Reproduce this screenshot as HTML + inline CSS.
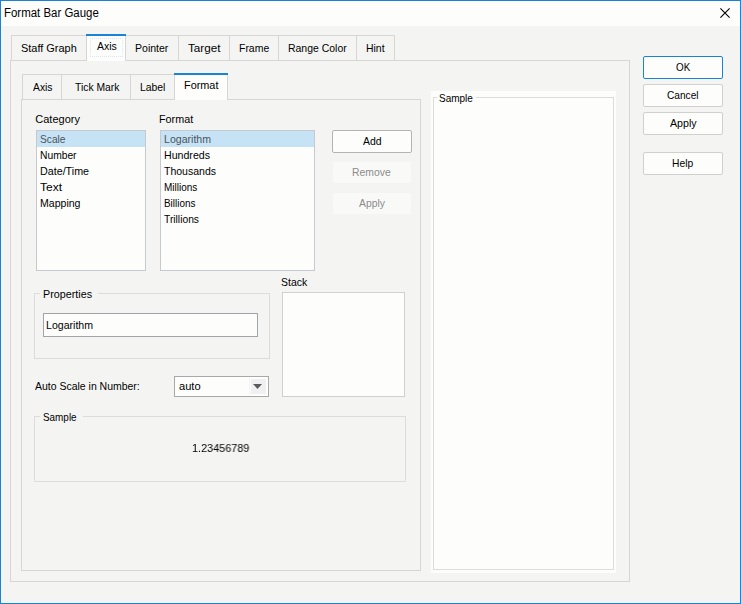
<!DOCTYPE html>
<html><head><meta charset="utf-8"><title>Format Bar Gauge</title>
<style>
html,body{margin:0;padding:0;}
body{width:741px;height:604px;position:relative;overflow:hidden;background:#f4f5f3;font-family:"Liberation Sans",sans-serif;}
div{position:absolute;}
.t{position:absolute;display:inline-block;white-space:nowrap;transform-origin:0 0;font-family:"Liberation Sans",sans-serif;}
</style></head><body>
<div style="left:0px;top:0px;width:741px;height:604px;background:#1883d7;"></div>
<div style="left:1px;top:1px;width:739px;height:602px;background:#f4f5f3;"></div>
<div style="left:1px;top:1px;width:739px;height:25px;background:#fdfefc;"></div>
<span class="t" style="left:3.8px;top:6.84px;font-size:12px;line-height:12px;color:#000;transform:scaleX(0.9539);">Format Bar Gauge</span>
<svg style="position:absolute;left:719px;top:7px" width="13" height="13" viewBox="0 0 13 13"><path d="M1.4 1.4 L10.6 10.6 M10.6 1.4 L1.4 10.6" stroke="#000" stroke-width="1.1" fill="none"/></svg>
<div style="left:10px;top:60px;width:620px;height:522px;border:1px solid #d6d7d5;box-sizing:border-box;"></div>
<div style="left:11px;top:35px;width:76px;height:26px;background:#f4f5f3;border:1px solid #d6d7d5;box-sizing:border-box;"></div>
<span class="t" style="left:21.4px;top:42.69px;font-size:11px;line-height:11px;color:#000;transform:scaleX(0.9947);">Staff Graph</span>
<div style="left:125px;top:35px;width:54px;height:26px;background:#f4f5f3;border:1px solid #d6d7d5;box-sizing:border-box;"></div>
<span class="t" style="left:135.4px;top:42.69px;font-size:11px;line-height:11px;color:#000;transform:scaleX(0.9570);">Pointer</span>
<div style="left:178px;top:35px;width:52px;height:26px;background:#f4f5f3;border:1px solid #d6d7d5;box-sizing:border-box;"></div>
<span class="t" style="left:188.4px;top:42.69px;font-size:11px;line-height:11px;color:#000;transform:scaleX(1.0621);">Target</span>
<div style="left:229px;top:35px;width:50px;height:26px;background:#f4f5f3;border:1px solid #d6d7d5;box-sizing:border-box;"></div>
<span class="t" style="left:238.895px;top:42.69px;font-size:11px;line-height:11px;color:#000;transform:scaleX(0.9500);">Frame</span>
<div style="left:278px;top:35px;width:79px;height:26px;background:#f4f5f3;border:1px solid #d6d7d5;box-sizing:border-box;"></div>
<span class="t" style="left:288.145px;top:42.69px;font-size:11px;line-height:11px;color:#000;transform:scaleX(0.9500);">Range Color</span>
<div style="left:356px;top:35px;width:39px;height:26px;background:#f4f5f3;border:1px solid #d6d7d5;box-sizing:border-box;"></div>
<span class="t" style="left:366.19px;top:42.69px;font-size:11px;line-height:11px;color:#000;transform:scaleX(0.9500);">Hint</span>
<div style="left:86px;top:34px;width:40px;height:27px;background:#fdfefc;border:1px solid #d6d7d5;box-sizing:border-box;border-bottom:none;"></div>
<div style="left:86px;top:34px;width:40px;height:2px;background:#1883d7;"></div>
<div style="left:90px;top:38px;width:33px;height:19px;border:1px dotted #d6e6f4;box-sizing:border-box;"></div>
<span class="t" style="left:96.7px;top:40.69px;font-size:11px;line-height:11px;color:#000;transform:scaleX(0.9519);">Axis</span>
<div style="left:21px;top:99px;width:400px;height:472px;border:1px solid #d6d7d5;box-sizing:border-box;"></div>
<div style="left:22px;top:74px;width:40px;height:26px;background:#f4f5f3;border:1px solid #d6d7d5;box-sizing:border-box;"></div>
<span class="t" style="left:32.8px;top:81.69px;font-size:11px;line-height:11px;color:#000;transform:scaleX(0.9375);">Axis</span>
<div style="left:61px;top:74px;width:70px;height:26px;background:#f4f5f3;border:1px solid #d6d7d5;box-sizing:border-box;"></div>
<span class="t" style="left:74.6px;top:81.69px;font-size:11px;line-height:11px;color:#000;transform:scaleX(0.9387);">Tick Mark</span>
<div style="left:130px;top:74px;width:46px;height:26px;background:#f4f5f3;border:1px solid #d6d7d5;box-sizing:border-box;"></div>
<span class="t" style="left:140.2px;top:81.69px;font-size:11px;line-height:11px;color:#000;transform:scaleX(0.9442);">Label</span>
<div style="left:174px;top:73px;width:54px;height:27px;background:#fdfefc;border:1px solid #d6d7d5;box-sizing:border-box;border-bottom:none;"></div>
<div style="left:174px;top:73px;width:54px;height:2px;background:#1883d7;"></div>
<span class="t" style="left:184.4px;top:79.69px;font-size:11px;line-height:11px;color:#000;transform:scaleX(0.9885);">Format</span>
<span class="t" style="left:35.3px;top:114.19px;font-size:11px;line-height:11px;color:#000;transform:scaleX(1.0000);">Category</span>
<span class="t" style="left:159.2px;top:114.19px;font-size:11px;line-height:11px;color:#000;transform:scaleX(0.9799);">Format</span>
<div style="left:36px;top:130px;width:110px;height:141px;background:#fdfefc;border:1px solid #c6c9cf;box-sizing:border-box;"></div>
<div style="left:37px;top:131px;width:108px;height:16px;background:#c5e3f5;"></div>
<span class="t" style="left:40.2px;top:133.69px;font-size:11px;line-height:11px;color:#4b5560;transform:scaleX(0.9273);">Scale</span>
<span class="t" style="left:40.2px;top:149.69px;font-size:11px;line-height:11px;color:#000;transform:scaleX(0.9335);">Number</span>
<span class="t" style="left:40.2px;top:165.69px;font-size:11px;line-height:11px;color:#000;transform:scaleX(0.9742);">Date/Time</span>
<span class="t" style="left:40.2px;top:181.69px;font-size:11px;line-height:11px;color:#000;transform:scaleX(1.0891);">Text</span>
<span class="t" style="left:40.2px;top:197.69px;font-size:11px;line-height:11px;color:#000;transform:scaleX(0.9597);">Mapping</span>
<div style="left:160px;top:130px;width:155px;height:141px;background:#fdfefc;border:1px solid #c6c9cf;box-sizing:border-box;"></div>
<div style="left:161px;top:131px;width:153px;height:16px;background:#c5e3f5;"></div>
<span class="t" style="left:164.2px;top:133.69px;font-size:11px;line-height:11px;color:#4b5560;transform:scaleX(0.9611);">Logarithm</span>
<span class="t" style="left:164.2px;top:149.69px;font-size:11px;line-height:11px;color:#000;transform:scaleX(0.9644);">Hundreds</span>
<span class="t" style="left:164.2px;top:165.69px;font-size:11px;line-height:11px;color:#000;transform:scaleX(0.9559);">Thousands</span>
<span class="t" style="left:164.2px;top:181.69px;font-size:11px;line-height:11px;color:#000;transform:scaleX(0.9074);">Millions</span>
<span class="t" style="left:164.2px;top:197.69px;font-size:11px;line-height:11px;color:#000;transform:scaleX(0.8997);">Billions</span>
<span class="t" style="left:164.2px;top:213.69px;font-size:11px;line-height:11px;color:#000;transform:scaleX(0.9333);">Trillions</span>
<div style="left:332px;top:130px;width:80px;height:23px;background:#fdfefc;border:1px solid #b4b4b4;box-sizing:border-box;border-radius:2px;"></div>
<span class="t" style="left:362.7px;top:135.69px;font-size:11px;line-height:11px;color:#000;transform:scaleX(0.9490);">Add</span>
<div style="left:333px;top:162px;width:78px;height:21px;background:#f9faf8;"></div>
<span class="t" style="left:352.3px;top:167.19px;font-size:11px;line-height:11px;color:#8b8b8b;transform:scaleX(0.9463);">Remove</span>
<div style="left:333px;top:193px;width:78px;height:21px;background:#f9faf8;"></div>
<span class="t" style="left:359px;top:197.69px;font-size:11px;line-height:11px;color:#8b8b8b;transform:scaleX(0.9455);">Apply</span>
<div style="left:34px;top:293px;width:236px;height:66px;border:1px solid #dcdddb;box-sizing:border-box;"></div>
<div style="left:40px;top:289px;width:58px;height:10px;background:#f4f5f3;"></div>
<span class="t" style="left:43.3px;top:288.69px;font-size:11px;line-height:11px;color:#000;transform:scaleX(0.9780);">Properties</span>
<div style="left:43px;top:313px;width:215px;height:24px;background:#fdfefc;border:1px solid #a2a4aa;box-sizing:border-box;"></div>
<span class="t" style="left:46.1px;top:320.19px;font-size:11px;line-height:11px;color:#000;transform:scaleX(0.9611);">Logarithm</span>
<span class="t" style="left:281.2px;top:276.69px;font-size:11px;line-height:11px;color:#000;transform:scaleX(0.9527);">Stack</span>
<div style="left:282px;top:292px;width:123px;height:105px;background:#fdfefc;border:1px solid #cfd0d0;box-sizing:border-box;"></div>
<span class="t" style="left:35.1px;top:380.69px;font-size:11px;line-height:11px;color:#000;transform:scaleX(0.9519);">Auto Scale in Number:</span>
<div style="left:174px;top:376px;width:95px;height:21px;background:#fdfefc;border:1px solid #a9a9a9;box-sizing:border-box;"></div>
<div style="left:251px;top:379px;width:15px;height:15px;background:#f0eff1;"></div>
<div style="left:249px;top:378px;width:1px;height:17px;background:#f3f3f2;"></div>
<svg style="position:absolute;left:253px;top:384px" width="9" height="5" viewBox="0 0 9 5"><path d="M0 0 L9 0 L4.5 5 Z" fill="#5a5a5a"/></svg>
<span class="t" style="left:178.5px;top:380.69px;font-size:11px;line-height:11px;color:#000;transform:scaleX(1.0093);">auto</span>
<div style="left:34px;top:416px;width:372px;height:66px;border:1px solid #dcdddb;box-sizing:border-box;"></div>
<div style="left:40px;top:412px;width:43px;height:10px;background:#f4f5f3;"></div>
<span class="t" style="left:43.1px;top:411.69px;font-size:11px;line-height:11px;color:#000;transform:scaleX(0.9008);">Sample</span>
<span class="t" style="left:192px;top:443.19px;font-size:11px;line-height:11px;color:#000;transform:scaleX(0.9862);opacity:0.999;will-change:transform;">1.23456789</span>
<div style="left:431px;top:91px;width:185px;height:482px;background:#fdfefc;"></div>
<div style="left:433px;top:97px;width:181px;height:473px;border:1px solid #dcdddb;box-sizing:border-box;"></div>
<div style="left:437px;top:93px;width:39px;height:10px;background:#fdfefc;"></div>
<span class="t" style="left:439.2px;top:92.69px;font-size:11px;line-height:11px;color:#000;transform:scaleX(0.9088);">Sample</span>
<div style="left:643px;top:56px;width:80px;height:23px;background:#fdfefc;border:1px solid #1883d7;box-sizing:border-box;border-radius:2px;"></div>
<span class="t" style="left:675.9px;top:61.69px;font-size:11px;line-height:11px;color:#000;transform:scaleX(0.8931);">OK</span>
<div style="left:643px;top:84px;width:80px;height:23px;background:#fdfefc;border:1px solid #d0d1cf;box-sizing:border-box;border-radius:2px;"></div>
<span class="t" style="left:666.8px;top:89.69px;font-size:11px;line-height:11px;color:#000;transform:scaleX(0.9211);">Cancel</span>
<div style="left:643px;top:112px;width:80px;height:23px;background:#fdfefc;border:1px solid #d0d1cf;box-sizing:border-box;border-radius:2px;"></div>
<span class="t" style="left:669.7px;top:117.69px;font-size:11px;line-height:11px;color:#000;transform:scaleX(0.9673);">Apply</span>
<div style="left:643px;top:152px;width:80px;height:23px;background:#fdfefc;border:1px solid #d0d1cf;box-sizing:border-box;border-radius:2px;"></div>
<span class="t" style="left:672.2px;top:157.69px;font-size:11px;line-height:11px;color:#000;transform:scaleX(0.9336);">Help</span>
</body></html>
